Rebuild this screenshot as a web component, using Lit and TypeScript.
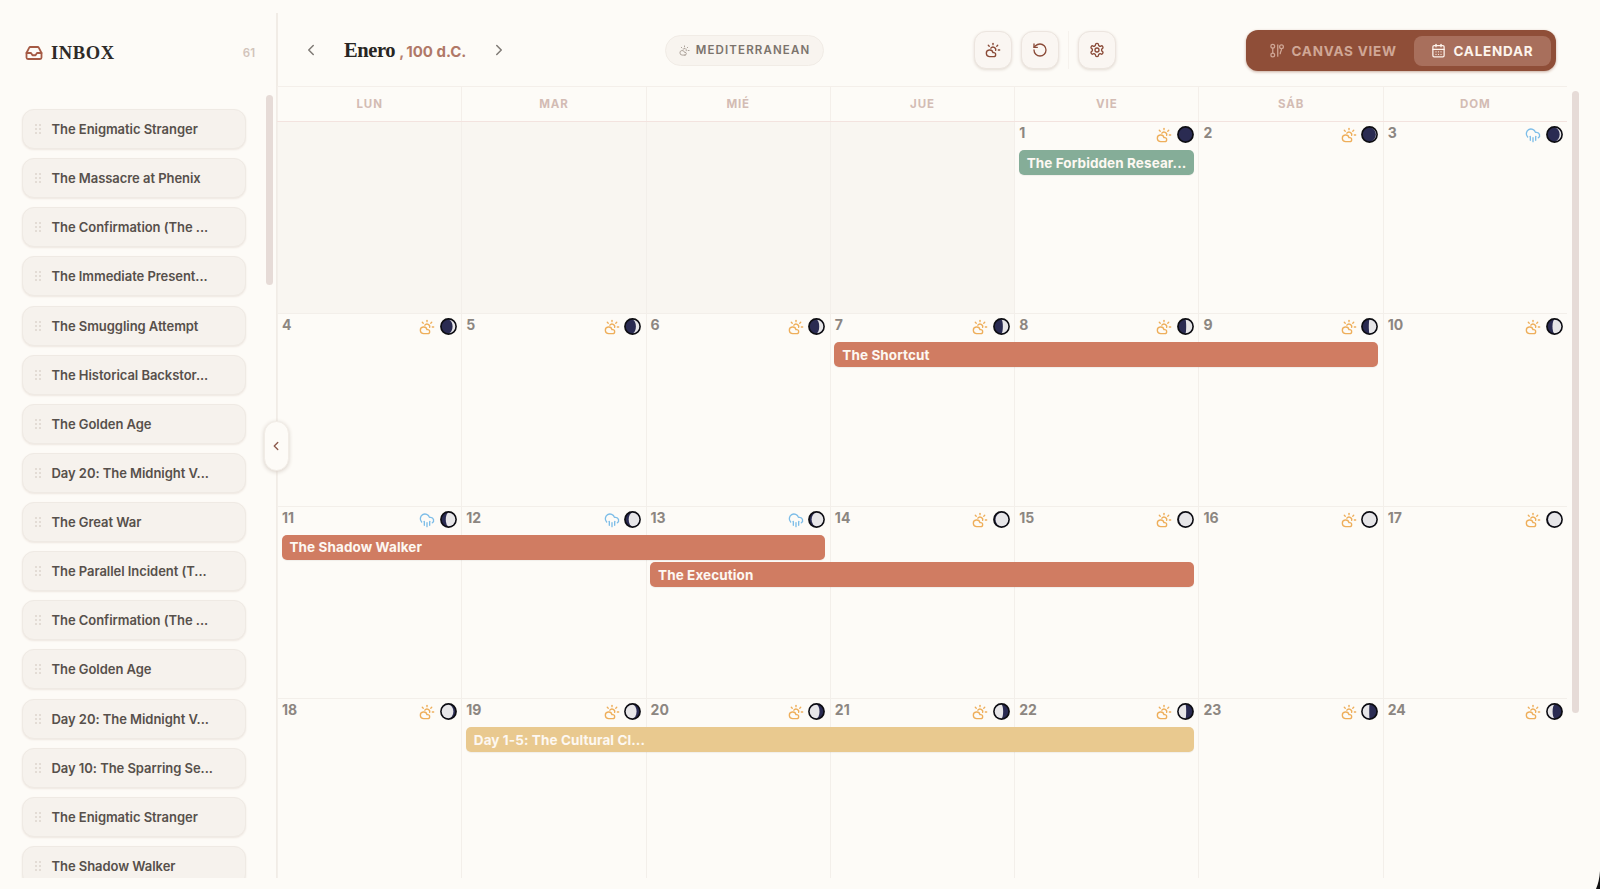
import { LitElement, html, css, svg } from "lit";
import { customElement } from "lit/decorators.js";

const INBOX = [
  "The Enigmatic Stranger","The Massacre at Phenix","The Confirmation (The ...","The Immediate Present...",
  "The Smuggling Attempt","The Historical Backstor...","The Golden Age","Day 20: The Midnight V...",
  "The Great War","The Parallel Incident (T...","The Confirmation (The ...","The Golden Age",
  "Day 20: The Midnight V...","Day 10: The Sparring Se...","The Enigmatic Stranger","The Shadow Walker",
];
const DAYS = ["LUN","MAR","MIÉ","JUE","VIE","SÁB","DOM"];
type Ev = { title: string; col: number; span: number; row: number; kind: string };
type Week = { days: { n?: number; w?: string; lit?: number }[]; events: Ev[] };

const rainDays = new Set([3, 11, 12, 13]);
// fraction lit per day; negative = lit on left, positive = lit on right
const LIT: Record<number, number> = {
  1: 0, 2: 0.03, 3: 0.12, 4: 0.2, 5: 0.25, 6: 0.3, 7: 0.4, 8: 0.45, 9: 0.55, 10: 0.65,
  11: 0.7, 12: 0.78, 13: 0.86, 14: 0.94, 15: 0.97, 16: 1, 17: 0.97,
  18: -0.86, 19: -0.8, 20: -0.72, 21: -0.62, 22: -0.55, 23: -0.48, 24: -0.36,
};
const mk = (n: number) => ({ n, w: rainDays.has(n) ? "rain" : "sun", lit: LIT[n] });
const WEEKS: Week[] = [
  { days: [{}, {}, {}, {}, mk(1), mk(2), mk(3)], events: [{ title: "The Forbidden Resear...", col: 5, span: 1, row: 2, kind: "green" }] },
  { days: [4,5,6,7,8,9,10].map(mk), events: [{ title: "The Shortcut", col: 4, span: 3, row: 2, kind: "orange" }] },
  { days: [11,12,13,14,15,16,17].map(mk), events: [
    { title: "The Shadow Walker", col: 1, span: 3, row: 2, kind: "orange" },
    { title: "The Execution", col: 3, span: 3, row: 3, kind: "orange" },
  ] },
  { days: [18,19,20,21,22,23,24].map(mk), events: [{ title: "Day 1-5: The Cultural Cl...", col: 2, span: 4, row: 2, kind: "yellow" }] },
];

const sunCloud = html`<svg class="wx sun" viewBox="0 0 24 24" fill="none" stroke="currentColor" stroke-width="2" stroke-linecap="round" stroke-linejoin="round"><path d="M12 2v2"/><path d="m4.93 4.93 1.41 1.41"/><path d="M20 12h2"/><path d="m19.07 4.93-1.41 1.41"/><path d="M15.95 12.65A4 4 0 0 0 8.8 9.3"/><path d="M13 22H7a5 5 0 1 1 4.9-6H13a3 3 0 0 1 0 6Z"/></svg>`;
const rainCloud = html`<svg class="wx rain" viewBox="0 0 24 24" fill="none" stroke="currentColor" stroke-width="2" stroke-linecap="round" stroke-linejoin="round"><path d="M4 14.9A7 7 0 1 1 15.7 8h1.8a4.5 4.5 0 0 1 2.5 8.2"/><path d="M16 14v6"/><path d="M8 14v6"/><path d="M12 16v6"/></svg>`;

function moon(l: number) {
  const r = 7.2;
  const a = Math.abs(l);
  const k = 2 * a - 1; // terminator x-radius factor
  const right = l >= 0;
  const rx = Math.abs(k) * r;
  const s1 = right ? 1 : 0;
  const s2 = (k > 0) === right ? 1 : 0;
  const d = `M9 ${9 - r}A${r} ${r} 0 0 ${s1} 9 ${9 + r}A${rx} ${r} 0 0 ${s2} 9 ${9 - r}Z`;
  return html`<svg class="moon" viewBox="0 0 18 18">
    <circle cx="9" cy="9" r="8" fill="#2a2b52" stroke="#0d0d12" stroke-width="1.8"/>
    ${a > 0 ? svg`<path d=${d} fill="#e7e6e8"/>` : ""}
  </svg>`;
}

@customElement("app-root")
export class AppRoot extends LitElement {
  static styles = css`
    :host { display: block; height: 889px; width: 1600px; overflow: hidden; position: relative; background: #fdfbf7; font-family: Inter, "Liberation Sans", sans-serif; color: #57504b; }
    .app { display: flex; height: 878px; }
    .side { width: 277px; box-sizing: border-box; flex: none; padding-top: 13px; position: relative; }
    .side-in { height: 100%; border-right: 2px solid #f1ece6; display: flex; flex-direction: column; overflow: hidden; box-sizing: border-box; width: 278px; position: relative; }
    .side-head { height: 80px; flex: none; display: flex; align-items: center; padding: 0 21px 0 25px; box-sizing: border-box; }
    .side-head svg { width: 18px; height: 18px; color: #a55a44; margin-right: 8px; }
    .side-head h1 { margin: 0; font: 700 18.5px "Liberation Serif", serif; letter-spacing: 0.6px; color: #2e2b28; flex: 1; }
    .count { font-size: 11.5px; font-weight: 600; color: #d2c4bb; }
    .list { display: flex; flex-direction: column; gap: 9.13px; padding: 16px 0 0 21.5px; }
    .card { width: 224px; height: 40px; flex: none; box-sizing: border-box; display: flex; align-items: center; background: #f6f2ed; border: 1px solid #efeae4; border-radius: 12px; box-shadow: 0 1px 2px #eee7e0; font-size: 13px; font-weight: 600; color: #57504b; letter-spacing: -0.05px; white-space: nowrap; }
    .grip { width: 6px; height: 10px; margin: 0 11px 0 12px; flex: none; color: #dcd5cd; }
    .scroll { position: absolute; left: 266px; top: 82px; width: 7px; height: 190px; border-radius: 4px; background: #e6dbd7; }
    .collapse { position: absolute; left: 263.5px; top: 421px; width: 25px; height: 50px; border-radius: 13px; background: #fdfbf7; box-shadow: 0 1px 4px #d8d0c8; border: 1px solid #f1ece6; box-sizing: border-box; display: flex; align-items: center; justify-content: center; color: #8c5a4c; z-index: 3; }
    .collapse svg { width: 14px; height: 14px; }

    .main { flex: 1; display: flex; flex-direction: column; min-width: 0; }
    .top { height: 86px; flex: none; display: flex; align-items: center; box-sizing: border-box; padding: 14px 0 0 25px; position: relative; }
    .nav { width: 18px; height: 18px; color: #7f7a75; flex: none; }
    .title { width: 146px; margin-left: 24px; display: flex; align-items: baseline; white-space: nowrap; flex: none; }
    .title b { font: 700 20.5px "Liberation Serif", serif; color: #282522; letter-spacing: -0.4px; }
    .title .c { color: #b58172; font-size: 15px; font-weight: 700; margin-left: 4px; }
    .title span.y { color: #b07867; font-size: 15px; font-weight: 700; margin-left: 2px; }
    .chip { margin-left: 157px; width: 159px; height: 31px; box-sizing: border-box; border: 1px solid #f1ece6; background: #f8f4ef; border-radius: 16px; display: flex; align-items: center; justify-content: center; gap: 6px; font-size: 11.5px; font-weight: 600; letter-spacing: 1.15px; color: #7b736c; flex: none; }
    .chip svg { width: 11px; height: 11px; color: #a69c94; }
    .tools { display: flex; align-items: center; margin-left: 150px; flex: none; }
    .tool { width: 38px; height: 38px; box-sizing: border-box; border: 1px solid #ece5df; border-radius: 12px; background: #faf6f2; box-shadow: 0 1px 3px #e3dbd3; display: flex; align-items: center; justify-content: center; color: #8a4a37; }
    .tool svg { width: 16px; height: 16px; }
    .tool + .tool { margin-left: 9px; }
    .sep { width: 1px; height: 38px; background: #f6f2ed; margin: 0 8.5px 0 9px; }
    .toggle { margin: 1px 0 0 130px; height: 41px; width: 310px; box-sizing: border-box; background: #8f4e38; border-radius: 12px; padding: 5px; display: flex; align-items: center; box-shadow: 0 1px 3px #c8ac9f; flex: none; }
    .tg { height: 30px; display: flex; align-items: center; gap: 8px; box-sizing: border-box; font-size: 13.5px; font-weight: 700; letter-spacing: 0.75px; white-space: nowrap; border-radius: 8px; }
    .tg svg { width: 15px; height: 15px; }
    .tg.off { width: 163px; padding-left: 18px; color: #d0a796; }
    .tg.on { width: 137px; padding-left: 17px; background: #a86f5c; color: #fdf4ec; }

    .cal { width: 1290px; flex: 1; position: relative; min-height: 0; display: flex; flex-direction: column; }
    .dow { display: grid; grid-template-columns: repeat(7, 1fr); height: 36px; flex: none; border-top: 1px solid #f4efea; border-bottom: 1px solid #f3e3df; box-sizing: border-box; }
    .dow div { display: flex; align-items: center; justify-content: center; font-size: 11.5px; font-weight: 700; letter-spacing: 0.9px; color: #d3bcb4; border-left: 1px solid #f4efea; }
    .week { display: grid; grid-template-columns: repeat(7, 1fr); grid-template-rows: 28px 27.5px 27.5px 1fr; height: 192.4px; box-sizing: border-box; border-bottom: 1px solid #f3efea; flex: none; }
    .week:last-child { border-bottom: 0; flex: 1; height: auto; }
    .cell { grid-row: 1 / -1; border-left: 1px solid #f3efea; min-width: 0; display: flex; align-items: flex-start; padding: 4px 4.5px 0 4px; box-sizing: border-box; }
    .cell.empty { background: #f9f6f1; }
    .cell:last-child { border-right: 1px solid #f3efea; }
    .num { font-size: 14px; font-weight: 700; color: #8c8681; flex: 1; line-height: 14px; }
    .wx { width: 16px; height: 16px; margin-top: 1px; }
    .sun { color: #eeae5a; }
    .rain { color: #7dbde8; }
    .moon { width: 17px; height: 17px; margin: 0 0 0 4.5px; flex: none; }
    .ev { grid-row: var(--r); z-index: 1; margin: 0 4.5px; height: 25px; border-radius: 5px; color: #fdf8f2; font-size: 13.5px; font-weight: 700; letter-spacing: 0.1px; display: flex; align-items: center; padding-left: 8px; white-space: nowrap; box-shadow: 0 1px 1px #0000000d; }
    .ev.orange { background: #d07c62; }
    .ev.green { background: #85ad98; }
    .ev.yellow { background: #e9c98f; }
    .rscroll { position: absolute; left: 1572px; top: 91px; width: 7px; height: 622px; border-radius: 4px; background: #e6dbd7; }
    .corner { position: absolute; right: 0; bottom: 0; width: 4px; height: 18px; z-index: 4; }
  `;

  render() {
    return html`
      <div class="app">
        <aside class="side">
          <div class="side-in">
            <div class="side-head">
              <svg viewBox="0 0 24 24" fill="none" stroke="currentColor" stroke-width="2.4" stroke-linecap="round" stroke-linejoin="round"><path d="M22 12h-6l-2 3h-4l-2-3H2"/><path d="M5.45 5.11 2 12v6a2 2 0 0 0 2 2h16a2 2 0 0 0 2-2v-6l-3.45-6.89A2 2 0 0 0 16.76 4H7.24a2 2 0 0 0-1.79 1.11z"/></svg>
              <h1>INBOX</h1>
              <span class="count">61</span>
            </div>
            <div class="list">
              ${INBOX.map((t) => html`<div class="card">
                <svg class="grip" viewBox="0 0 6 10" fill="currentColor"><circle cx="1" cy="1" r="1"/><circle cx="5" cy="1" r="1"/><circle cx="1" cy="5" r="1"/><circle cx="5" cy="5" r="1"/><circle cx="1" cy="9" r="1"/><circle cx="5" cy="9" r="1"/></svg>
                ${t}</div>`)}
            </div>
            <div class="scroll"></div>
          </div>
        </aside>
        <main class="main">
          <header class="top">
            <svg class="nav" viewBox="0 0 24 24" fill="none" stroke="currentColor" stroke-width="2" stroke-linecap="round" stroke-linejoin="round"><path d="m15 18-6-6 6-6"/></svg>
            <div class="title"><b>Enero</b><span class="c">,</span><span class="y">100 d.C.</span></div>
            <svg class="nav" viewBox="0 0 24 24" fill="none" stroke="currentColor" stroke-width="2" stroke-linecap="round" stroke-linejoin="round"><path d="m9 18 6-6-6-6"/></svg>
            <div class="chip">
              <svg viewBox="0 0 24 24" fill="none" stroke="currentColor" stroke-width="2" stroke-linecap="round" stroke-linejoin="round"><path d="M12 2v2"/><path d="m4.93 4.93 1.41 1.41"/><path d="M20 12h2"/><path d="m19.07 4.93-1.41 1.41"/><path d="M15.95 12.65A4 4 0 0 0 8.8 9.3"/><path d="M13 22H7a5 5 0 1 1 4.9-6H13a3 3 0 0 1 0 6Z"/></svg>
              MEDITERRANEAN
            </div>
            <div class="tools">
              <div class="tool"><svg viewBox="0 0 24 24" fill="none" stroke="currentColor" stroke-width="2" stroke-linecap="round" stroke-linejoin="round"><path d="M12 2v2"/><path d="m4.93 4.93 1.41 1.41"/><path d="M20 12h2"/><path d="m19.07 4.93-1.41 1.41"/><path d="M15.95 12.65A4 4 0 0 0 8.8 9.3"/><path d="M13 22H7a5 5 0 1 1 4.9-6H13a3 3 0 0 1 0 6Z"/></svg></div>
              <div class="tool"><svg viewBox="0 0 24 24" fill="none" stroke="currentColor" stroke-width="2" stroke-linecap="round" stroke-linejoin="round"><path d="M3 12a9 9 0 1 0 9-9 9.75 9.75 0 0 0-6.74 2.74L3 8"/><path d="M3 3v5h5"/></svg></div>
              <div class="sep"></div>
              <div class="tool"><svg viewBox="0 0 24 24" fill="none" stroke="currentColor" stroke-width="2" stroke-linecap="round" stroke-linejoin="round"><path d="M12.22 2h-.44a2 2 0 0 0-2 2v.18a2 2 0 0 1-1 1.73l-.43.25a2 2 0 0 1-2 0l-.15-.08a2 2 0 0 0-2.73.73l-.22.38a2 2 0 0 0 .73 2.73l.15.1a2 2 0 0 1 1 1.72v.51a2 2 0 0 1-1 1.74l-.15.09a2 2 0 0 0-.73 2.73l.22.38a2 2 0 0 0 2.73.73l.15-.08a2 2 0 0 1 2 0l.43.25a2 2 0 0 1 1 1.73V20a2 2 0 0 0 2 2h.44a2 2 0 0 0 2-2v-.18a2 2 0 0 1 1-1.73l.43-.25a2 2 0 0 1 2 0l.15.08a2 2 0 0 0 2.73-.73l.22-.39a2 2 0 0 0-.73-2.73l-.15-.08a2 2 0 0 1-1-1.74v-.5a2 2 0 0 1 1-1.74l.15-.09a2 2 0 0 0 .73-2.73l-.22-.38a2 2 0 0 0-2.73-.73l-.15.08a2 2 0 0 1-2 0l-.43-.25a2 2 0 0 1-1-1.73V4a2 2 0 0 0-2-2z"/><circle cx="12" cy="12" r="3"/></svg></div>
            </div>
            <div class="toggle">
              <div class="tg off"><svg viewBox="0 0 24 24" fill="none" stroke="currentColor" stroke-width="2" stroke-linecap="round" stroke-linejoin="round"><circle cx="6" cy="19" r="3"/><circle cx="6" cy="5" r="3"/><path d="M6 8v8"/><path d="M14 3v18"/><circle cx="20" cy="6" r="3"/><path d="M20 9c0 4-2 5-2 8"/></svg>CANVAS VIEW</div>
              <div class="tg on"><svg viewBox="0 0 24 24" fill="none" stroke="currentColor" stroke-width="2" stroke-linecap="round" stroke-linejoin="round"><path d="M8 2v4"/><path d="M16 2v4"/><rect width="18" height="18" x="3" y="4" rx="2"/><path d="M3 10h18"/><path d="M8 14h.01"/><path d="M12 14h.01"/><path d="M16 14h.01"/><path d="M8 18h.01"/><path d="M12 18h.01"/><path d="M16 18h.01"/></svg>CALENDAR</div>
            </div>
          </header>
          <section class="cal">
            <div class="dow">${DAYS.map((d) => html`<div>${d}</div>`)}</div>
            ${WEEKS.map((w) => html`<div class="week">
              ${w.days.map((d, i) => html`<div class="cell ${d.n ? "" : "empty"}" style="grid-column:${i + 1}">
                ${d.n ? html`<span class="num">${d.n}</span>${d.w === "rain" ? rainCloud : sunCloud}${moon(d.lit ?? 0)}` : ""}
              </div>`)}
              ${w.events.map((e) => html`<div class="ev ${e.kind}" style="grid-column:${e.col} / span ${e.span};--r:${e.row}">${e.title}</div>`)}
            </div>`)}
          </section>
        </main>
      </div>
      <div class="collapse"><svg viewBox="0 0 24 24" fill="none" stroke="currentColor" stroke-width="2.4" stroke-linecap="round" stroke-linejoin="round"><path d="m15 18-6-6 6-6"/></svg></div>
      <div class="rscroll"></div>
      <svg class="corner" viewBox="0 0 4 18"><path d="M4 0Q3.4 10 0 18H4Z" fill="#111"/></svg>
    `;
  }
}
